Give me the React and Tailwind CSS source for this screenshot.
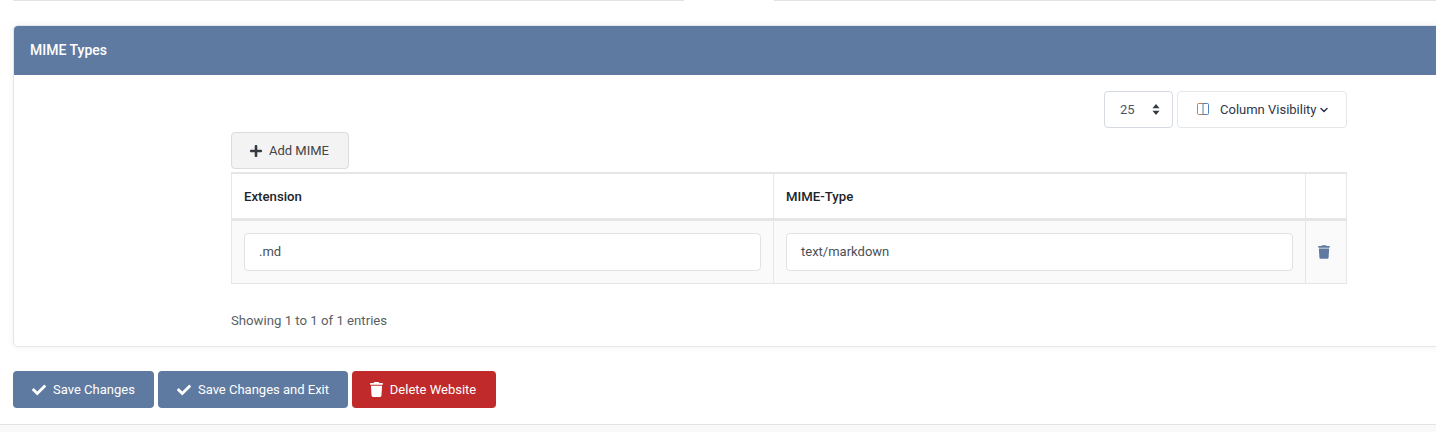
import { ChevronDown } from 'lucide-react'

function TrashIcon({ className }) {
  return (
    <svg viewBox="0 0 448 512" className={className} fill="currentColor">
      <path d="M135.2 17.7L128 32H32C14.3 32 0 46.3 0 64S14.3 96 32 96H416c17.7 0 32-14.3 32-32s-14.3-32-32-32H320l-7.2-14.3C307.4 6.8 296.3 0 284.2 0H163.8c-12.1 0-23.2 6.8-28.6 17.7zM416 128H32L53.2 467c1.6 25.3 22.6 45 47.9 45H346.9c25.3 0 46.3-19.7 47.9-45L416 128z" />
    </svg>
  )
}

function CheckIcon({ className }) {
  return (
    <svg viewBox="0 0 512 512" className={className} fill="currentColor">
      <path d="M173.898 439.404l-166.4-166.4c-9.997-9.997-9.997-26.206 0-36.204l36.203-36.204c9.997-9.998 26.207-9.998 36.204 0L192 312.69 432.095 72.596c9.997-9.997 26.207-9.997 36.204 0l36.203 36.204c9.997 9.997 9.997 26.206 0 36.204l-294.4 294.401c-9.998 9.997-26.207 9.997-36.204-.001z" />
    </svg>
  )
}

function PlusIcon({ className }) {
  return (
    <svg viewBox="0 0 448 512" className={className} fill="currentColor">
      <path d="M416 208H272V64c0-17.67-14.33-32-32-32h-32c-17.67 0-32 14.33-32 32v144H32c-17.67 0-32 14.33-32 32v32c0 17.67 14.33 32 32 32h144v144c0 17.67 14.33 32 32 32h32c17.67 0 32-14.33 32-32V304h144c17.67 0 32-14.33 32-32v-32c0-17.67-14.33-32-32-32z" />
    </svg>
  )
}

function ActionButton({ color, icon, width, children }) {
  return (
    <button className={`flex h-[37px] items-center justify-center gap-[7px] rounded text-[13px] text-white ${color} ${width}`}>
      {icon}
      {children}
    </button>
  )
}

export default function App() {
  return (
    <div className="h-[432px] w-[1436px] overflow-hidden bg-white font-['Roboto',sans-serif] text-[13px] text-[#212529]">
      {/* Previous section borders */}
      <div className="flex h-px">
        <div className="ml-[13px] w-[671px] bg-[#e3e3e3]" />
        <div className="ml-[90px] grow bg-[#e3e3e3]" />
      </div>

      {/* MIME card */}
      <div className="ml-[13px] mt-6 h-[322px] w-[1440px] rounded border border-[#e4e6e9] shadow-[0_0_6px_rgba(0,0,0,0.06)]">
        <div className="flex h-[49px] items-center rounded-t bg-[#5f7aa0] pl-[16px] text-[14px] font-medium text-white">
          MIME Types
        </div>

        <div className="ml-[217px] w-[1116px]">
          <div className="flex justify-end gap-1 pt-4">
            <div className="flex h-[37px] w-[69px] items-center justify-between rounded border border-[#d5dae2] pl-[15px] pr-[12px] text-[#4a5568]">
              25
              <svg viewBox="0 0 10 14" className="h-[11px] w-[8px] text-[#343a40]" fill="currentColor">
                <path d="M5 0l4.5 5.5h-9zM5 14L.5 8.5h9z" />
              </svg>
            </div>
            <div className="flex h-[37px] w-[170px] items-center rounded border border-[#e4e6e9] pl-[18px] text-[#2d3748]">
              <svg viewBox="0 0 14 14" className="-mt-[2px] h-[14px] w-[14px]" fill="none" strokeWidth="1">
                <path d="M7 1.5H2.5a1 1 0 0 0-1 1v9a1 1 0 0 0 1 1H7" stroke="#c77f52" />
                <path d="M7 1.5h4.5a1 1 0 0 1 1 1v9a1 1 0 0 1-1 1H7" stroke="#4f83c4" />
                <path d="M7 1.5v11" stroke="#5f7aa0" />
              </svg>
              <span className="ml-[10px]">Column Visibility</span>
              <ChevronDown className="ml-[1px] h-[12px] w-[12px]" strokeWidth={3} />
            </div>
          </div>

          <button className="mt-1 flex h-[37px] w-[118px] items-center justify-center gap-[7px] rounded border border-[#dcdcdc] bg-[#f3f3f3] text-[#444]">
            <PlusIcon className="-ml-[1px] h-[14px] w-[12px] text-[#343a40]" />
            Add MIME
          </button>

          <div className="mt-[3px] border-x border-y-2 border-[#e6e6e6] border-b-[1px]">
            <div className="box-content flex h-[44px] items-center border-b-[3px] border-[#e6e6e6] text-[13.2px] font-medium text-[#212529]">
              <div className="flex h-full w-[542px] items-center border-r border-[#e6e6e6] pl-3 pt-[2px]">Extension</div>
              <div className="flex h-full w-[532px] items-center border-r border-[#e6e6e6] pl-3 pt-[2px]">MIME-Type</div>
              <div className="h-full grow" />
            </div>
            <div className="flex h-[62px] bg-[#fafafa]">
              <div className="flex w-[542px] items-center border-r border-[#e6e6e6] px-3">
                <div className="flex h-[38px] w-full items-center rounded border border-[#e2e2e2] bg-white pl-[14px] text-[#495057]">.md</div>
              </div>
              <div className="flex w-[532px] items-center border-r border-[#e6e6e6] px-3">
                <div className="flex h-[38px] w-full items-center rounded border border-[#e2e2e2] bg-white pl-[14px] text-[#495057]">text/markdown</div>
              </div>
              <div className="flex grow items-center justify-center pr-[4px]">
                <TrashIcon className="-mt-[1px] h-[14px] w-[12px] text-[#5f7aa0]" />
              </div>
            </div>
          </div>

          <div className="mt-[27px] text-[13.2px] text-[#5a5f66]">Showing 1 to 1 of 1 entries</div>
        </div>
      </div>

      {/* Actions */}
      <div className="ml-[13px] mt-6 flex gap-1">
        <ActionButton color="bg-[#5f7aa0]" width="w-[141px]" icon={<CheckIcon className="h-[14px] w-[14px]" />}>Save Changes</ActionButton>
        <ActionButton color="bg-[#5f7aa0]" width="w-[190px]" icon={<CheckIcon className="h-[14px] w-[14px]" />}>Save Changes and Exit</ActionButton>
        <ActionButton color="bg-[#c02a2a]" width="w-[144px]" icon={<TrashIcon className="-ml-[2px] h-[15px] w-[13px]" />}>Delete Website</ActionButton>
      </div>

      {/* Footer edge */}
      <div className="mt-4 h-[8px] border-t border-[#e3e3e3] bg-[#f9f9f9]" />
    </div>
  )
}
